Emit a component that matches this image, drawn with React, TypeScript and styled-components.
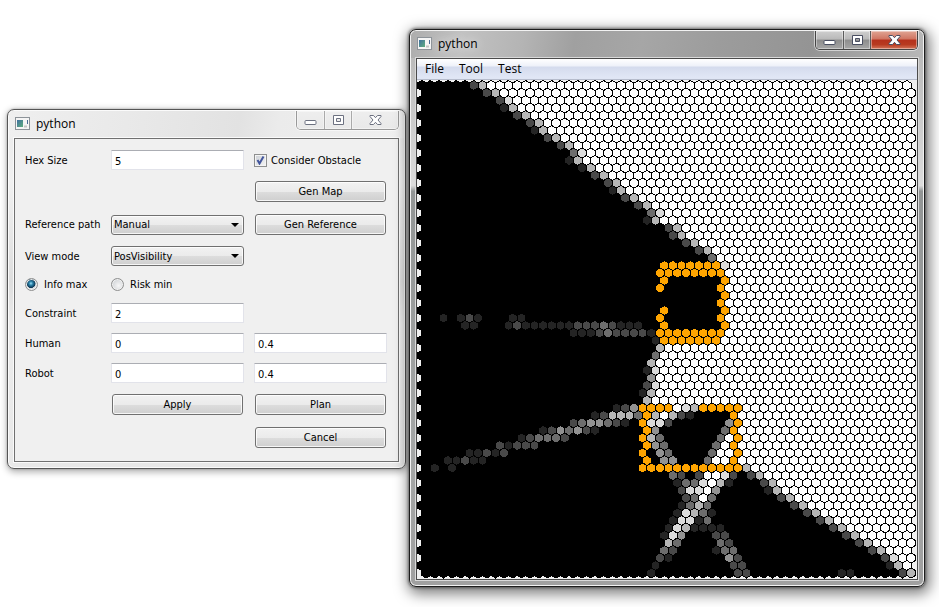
import React from "react";
import styled, { createGlobalStyle } from "styled-components";

const GlobalStyle = createGlobalStyle`
  *, *::before, *::after { box-sizing: border-box; }
  body {
    margin: 0;
    background: #fff;
    color: #000;
    font-family: "DejaVu Sans Condensed", Tahoma, sans-serif;
    font-size: 11px;
    overflow-x: hidden;
  }
`;

const Desktop = styled.main`
  display: grid;
  grid-template-columns: minmax(0, 399fr) minmax(0, 516fr);
  align-items: start;
  gap: 3px;
  padding: 29px 14px 20px 7px;
`;

const Frame = styled.section<{ $active?: boolean }>`
  min-width: 0;
  margin-top: ${(p) => (p.$active ? 0 : 80)}px;
  position: relative;
  z-index: ${(p) => (p.$active ? 1 : 0)};
  padding: 0 6px 6px;
  border: 1px solid ${(p) => (p.$active ? "#1c1c1c" : "#555")};
  border-radius: 7px;
  background: ${(p) =>
    p.$active
      ? "linear-gradient(180deg, #b4b4b4 0%, #c8c8c8 14%, #dcdcdc 28%, #929595 29%, #a4a6a6 75%, #a0a0a0 100%)"
      : "linear-gradient(180deg, #e9e9e9 0%, #f1f1f1 20%, #dedede 48%, #ececec 60%, #e8e8e8 100%)"};
  box-shadow: ${(p) =>
    p.$active
      ? "inset 0 0 0 1px #f2f2f2, 0 0 3px 1px rgba(0,0,0,.45), 2px 4px 14px 3px rgba(0,0,0,.5)"
      : "inset 0 0 0 1px #fbfbfb, 0 0 2px rgba(0,0,0,.3), 1px 2px 7px 1px rgba(0,0,0,.32)"};
`;

const TitleBar = styled.header<{ $active?: boolean }>`
  display: flex;
  align-items: flex-start;
  height: 27px;
  margin: 1px -5px 0;
  padding: 0 5px 0 6px;
  border-radius: 6px 6px 0 0;
  background: ${(p) =>
    p.$active
      ? "linear-gradient(100deg, #adadad 0%, #c2c2c2 10%, #b4b4b4 22%, #a0a0a0 32%, #a6a6a6 45%, #9c9c9c 60%, #949494 78%, #b8b8b8 100%)"
      : "linear-gradient(100deg, #efefef 0%, #e9e9e9 30%, #e2e2e2 58%, #ebebeb 68%, #f0f0f0 100%)"};
`;

const Title = styled.h1<{ $active?: boolean }>`
  flex: 1;
  margin: 0 0 0 5px;
  font: 400 12px/26px "Open Sans", "Noto Sans", sans-serif;
  text-shadow: ${(p) => (p.$active ? "0 0 10px #fff" : "none")};
`;

const AppIconBox = styled.span`
  display: flex;
  margin-top: 6px;
`;

const Controls = styled.div<{ $active?: boolean }>`
  display: flex;
  height: 19px;
  border: 1px solid ${(p) => (p.$active ? "#444" : "#999")};
  border-top: 0;
  border-radius: 0 0 5px 5px;
  overflow: hidden;
  box-shadow: 0 0 0 1px rgba(255, 255, 255, 0.55);
`;

const ControlButton = styled.button<{ $active?: boolean; $close?: boolean; $divided?: boolean }>`
  display: flex;
  align-items: center;
  justify-content: center;
  width: ${(p) => (p.$close ? 47 : 27)}px;
  padding: 0;
  border: 0 solid ${(p) => (p.$active ? "#5b5b5b" : "#aaa")};
  border-left-width: ${(p) => (p.$divided ? 1 : 0)}px;
  background: ${(p) =>
    !p.$active
      ? "linear-gradient(#eee, #e9e9e9)"
      : p.$close
        ? "linear-gradient(#e0a594 0%, #cf7461 45%, #b5311c 50%, #b83a20 75%, #d3765b 100%)"
        : "linear-gradient(#cfcfcf 0%, #b9b9b9 45%, #8d8d8d 50%, #a6a6a6 100%)"};
  box-shadow: inset 0 0 0 1px rgba(255, 255, 255, 0.4);
`;

const Client = styled.div<{ $menu?: boolean }>`
  border: 1px solid ${(p) => (p.$menu ? "#4b4b4b" : "#707070")};
  box-shadow: 0 0 0 1px ${(p) => (p.$menu ? "#d9d9d9" : "#fafafa")};
  background: #f0f0f0;
`;

const MenuBar = styled.nav`
  display: flex;
  align-items: center;
  height: 21px;
  padding-left: 8px;
  gap: 15px;
  background: linear-gradient(#fff 0%, #eef1f9 35%, #d4dbed 40%, #e0e6f5 90%);
  border-bottom: 1px solid #b6bccc;
`;

const MenuItem = styled.button`
  padding: 0;
  border: 0;
  background: none;
  color: #000;
  font: 400 12px/20px "Open Sans", "Noto Sans", sans-serif;
`;

const HexMap = styled.svg`
  display: block;
  width: 100%;
  height: auto;
`;

const Form = styled.form`
  display: grid;
  grid-template-columns: 76px 1fr 1fr;
  grid-template-rows: 20px 23px 23px 20px 17px 20px 20px 20px 23px 23px;
  column-gap: 10px;
  row-gap: 10px;
  align-items: center;
  padding: 11px 11px 12px 10px;
`;

const Label = styled.label`
  grid-column: 1;
  white-space: nowrap;
`;

const Field = styled.input<{ $col?: number }>`
  grid-column: ${(p) => p.$col ?? 2};
  width: 100%;
  min-width: 0;
  height: 20px;
  padding: 2px 3px 0;
  border: 1px solid #e2e3ea;
  border-top-color: #abadb3;
  border-radius: 1px;
  background: #fff;
  color: #000;
  font: inherit;
`;

const PushButton = styled.button<{ $col?: number }>`
  grid-column: ${(p) => p.$col ?? 3};
  height: 21px;
  margin: 0 1px;
  padding: 0;
  border: 1px solid #707070;
  border-radius: 3px;
  background: linear-gradient(#f2f2f2 0%, #ebebeb 50%, #dddddd 51%, #cfcfcf 100%);
  box-shadow: inset 0 0 0 1px rgba(255, 255, 255, 0.8);
  color: #000;
  font: inherit;
`;

const SelectWrap = styled.div`
  display: flex;
  position: relative;
  grid-column: 2;
`;

const Select = styled.select`
  appearance: none;
  width: 100%;
  height: 20px;
  padding: 0 20px 0 2px;
  border: 1px solid #707070;
  border-radius: 3px;
  background: linear-gradient(#f2f2f2 0%, #ebebeb 50%, #dddddd 51%, #cfcfcf 100%);
  box-shadow: inset 0 0 0 1px rgba(255, 255, 255, 0.8);
  color: #000;
  font: inherit;
`;

const Arrow = styled.svg`
  position: absolute;
  right: 5px;
  top: 8px;
  pointer-events: none;
`;

const Choice = styled.label<{ $col: number }>`
  display: flex;
  align-items: center;
  gap: ${(p) => (p.$col === 3 ? 4 : 6)}px;
  grid-column: ${(p) => p.$col};
  white-space: nowrap;
`;

const CheckBox = styled.input`
  appearance: none;
  width: 13px;
  height: 13px;
  margin: 0;
  border: 1px solid #8e8f8f;
  background: linear-gradient(135deg, #cbcfd5, #f6f6f6);
  background-clip: content-box;
  padding: 1px;
  box-shadow: inset 0 0 0 1px #f4f4f4;
`;

const CheckWrap = styled.span`
  display: flex;
  position: relative;
`;

const CheckMark = styled.svg`
  position: absolute;
  left: 2px;
  top: 1px;
  pointer-events: none;
`;

const Radio = styled.input`
  appearance: none;
  width: 13px;
  height: 13px;
  margin: 0;
  border: 1px solid #8e8f8f;
  border-radius: 50%;
  background: radial-gradient(circle at 60% 60%, #f7f7f7, #c3c7cc);
  box-shadow: inset 0 0 0 1px #f0f0f0;
  &:checked {
    background: radial-gradient(circle at 45% 40%, #9fe0f5 0, #2d86ad 20%, #0b3450 48%, #d5dade 54%);
  }
`;

const HEX = 5;
const STEP_X = Math.sqrt(3) * HEX;
const STEP_Y = HEX * 1.5;
const COLS = 57;

const COLORS: Record<string, string> = {
  "0": "#000",
  "1": "#242424",
  "2": "#494949",
  "3": "#6d6d6d",
  "4": "#929292",
  "5": "#b6b6b6",
  "6": "#dbdbdb",
  "7": "#fff",
  o: "#ffa500",
};

// One entry per row: "column:cells" groups. Cells that follow a group ending
// in "+" stay white to the right edge; all other gaps are unseen (black).
const ROWS: string[] = [
  "6:25+", "7:25+", "9:26+", "9:15+", "11:25+", "12:25+", "13:15+", "14:25+",
  "16:25+", "17:36+", "17:15+", "18:15+", "20:25+", "21:25+", "22:15+", "23:25+",
  "25:25+", "26:36+", "26:15+", "28:25+", "29:25+", "30:25+", "32:25+", "33:3+",
  "28:ooooooo6+", "27:oooooooo+", "28:o 35:o+", "27:o 34:o+", "35:o+", "34:o+",
  "28:o 35:o+",
  "2:1 4:121 10:11 27:o 34:o+",
  "5:11 10:12111111222321 24:11 28:o 35:o+",
  "17:1112322221oooooooo+",
  "27:1ooooooo+", "27:5+", "27:3+", "26:5+", "26:16+", "26:4+", "26:26+", "25:15+",
  "26:5+",
  "22:124oooo765ooooo+",
  "20:125553o57521 36:o+",
  "17:2344321 25:o662 35:4o+",
  "14:1243421 26:o4 35:3o+",
  "11:123332 25:o53 34:37o+",
  "9:21222 26:o43 34:37o+",
  "5:11212 25:o 27:43 33:377o+",
  "3:11211 26:o 28:44 33:377o+",
  "1:1 3:1 25:oooooooooooo5+",
  "29:32 32:27762 38:25+",
  "29:1336751 39:25+",
  "30:26674 40:15+",
  "30:2373 41:25+",
  "30:1353 43:25+",
  "29:16531 44:25+",
  "29:16613 46:25+",
  "28:1651111 47:25+",
  "28:164 34:22 49:25+",
  "28:53 34:32 50:25+",
  "28:32 34:133 52:25+",
  "27:21 35:42 53:26+",
  "27:1 36:22 54:15+",
  "26:1 36:22 48:11 55:25",
];

function expandRow(spec: string): string {
  const cells = Array<string>(COLS).fill("0");
  for (const group of spec.split(" ")) {
    const [start, body] = group.split(":");
    const run = body.replace("+", "");
    let col = Number(start);
    for (const c of run) cells[col++] = c;
    if (body.endsWith("+")) cells.fill("7", col);
  }
  return cells.join("");
}

function hexPath(row: number, col: number): string {
  const cx = 4.8 + col * STEP_X + (row % 2 ? STEP_X / 2 : 0);
  const cy = 5.5 + row * STEP_Y;
  const w = STEP_X / 2;
  const pts = [
    [cx, cy - HEX], [cx + w, cy - HEX / 2], [cx + w, cy + HEX / 2],
    [cx, cy + HEX], [cx - w, cy + HEX / 2], [cx - w, cy - HEX / 2],
  ];
  return "M" + pts.map(([x, y]) => `${x.toFixed(2)} ${y.toFixed(2)}`).join("L") + "Z";
}

const LAYERS: Record<string, string> = {};
ROWS.forEach((spec, row) => {
  [...expandRow(spec)].forEach((value, col) => {
    LAYERS[value] = (LAYERS[value] ?? "") + hexPath(row, col);
  });
});

function AppIcon() {
  return (
    <AppIconBox>
      <svg width="16" height="14" viewBox="0 0 16 14" aria-hidden="true">
        <defs>
          <linearGradient id="tile" x1="0" y1="0" x2="1" y2="1">
            <stop offset="0" stopColor="#3f6fa0" />
            <stop offset="1" stopColor="#5fae7e" />
          </linearGradient>
        </defs>
        <rect x="0.5" y="0.5" width="14" height="12" fill="#f5f5f5" stroke="#8d9399" />
        <rect x="2" y="3" width="6" height="7" fill="url(#tile)" />
        <path d="M12.5 3v4" stroke="#4a6a94" />
        <path d="M9 9.5h3" stroke="#c4c4c4" strokeWidth="2" />
      </svg>
    </AppIconBox>
  );
}

function WindowControls({ active }: { active?: boolean }) {
  const ink = active ? "#494e61" : "#6c7180";
  return (
    <Controls $active={active}>
      <ControlButton type="button" aria-label="Minimize" $active={active}>
        <svg width="13" height="13" viewBox="0 0 13 13">
          <rect x="1" y="6.5" width="11" height="4" rx="1" fill="#fff" stroke={ink} />
        </svg>
      </ControlButton>
      <ControlButton type="button" aria-label="Maximize" $active={active} $divided>
        <svg width="13" height="11" viewBox="0 0 13 11">
          <path
            d="M1.5.5h10v9h-10zM4.5 3.5v3h4v-3z"
            fill="#fff"
            fillRule="evenodd"
            stroke={ink}
          />
        </svg>
      </ControlButton>
      <ControlButton type="button" aria-label="Close" $active={active} $close $divided>
        <svg width="13" height="11" viewBox="0 0 13 11">
          <path
            d="M1 .5h3.500L6.500 2.700 8.500.5H12v1L9 5l3 3.500v1H8.500L6.500 7.300 4.500 9.500H1v-1L4 5 1 1.500z"
            fill="#fff"
            stroke={ink}
          />
        </svg>
      </ControlButton>
    </Controls>
  );
}

function ComboBox({ id, options }: { id: string; options: string[] }) {
  return (
    <SelectWrap>
      <Select id={id}>
        {options.map((o) => (
          <option key={o}>{o}</option>
        ))}
      </Select>
      <Arrow width="8" height="4" viewBox="0 0 8 4" aria-hidden="true">
        <path d="M0 0h8L4 4z" fill="#000" />
      </Arrow>
    </SelectWrap>
  );
}

function SettingsDialog() {
  return (
    <Frame>
      <TitleBar>
        <AppIcon />
        <Title>python</Title>
        <WindowControls />
      </TitleBar>
      <Client>
        <Form onSubmit={(e) => e.preventDefault()}>
          <Label htmlFor="hex">Hex Size</Label>
          <Field id="hex" defaultValue="5" />
          <Choice $col={3}>
            <CheckWrap>
              <CheckBox type="checkbox" defaultChecked />
              <CheckMark width="9" height="10" viewBox="0 0 9 10" aria-hidden="true">
                <path d="M1.500 5L3.500 8.500 7.500 1.500" fill="none" stroke="#42559c" strokeWidth="2" />
              </CheckMark>
            </CheckWrap>
            Consider Obstacle
          </Choice>
          <PushButton type="button">Gen Map</PushButton>
          <Label htmlFor="ref">Reference path</Label>
          <ComboBox id="ref" options={["Manual"]} />
          <PushButton type="button">Gen Reference</PushButton>
          <Label htmlFor="view">View mode</Label>
          <ComboBox id="view" options={["PosVisibility"]} />
          <Choice $col={1}>
            <Radio type="radio" name="goal" defaultChecked />
            Info max
          </Choice>
          <Choice $col={2}>
            <Radio type="radio" name="goal" />
            Risk min
          </Choice>
          <Label htmlFor="constraint">Constraint</Label>
          <Field id="constraint" defaultValue="2" />
          <Label htmlFor="human">Human</Label>
          <Field id="human" defaultValue="0" />
          <Field $col={3} aria-label="Human weight" defaultValue="0.4" />
          <Label htmlFor="robot">Robot</Label>
          <Field id="robot" defaultValue="0" />
          <Field $col={3} aria-label="Robot weight" defaultValue="0.4" />
          <PushButton type="button" $col={2}>Apply</PushButton>
          <PushButton type="button">Plan</PushButton>
          <PushButton type="button">Cancel</PushButton>
        </Form>
      </Client>
    </Frame>
  );
}

function MapWindow() {
  return (
    <Frame $active>
      <TitleBar $active>
        <AppIcon />
        <Title $active>python</Title>
        <WindowControls active />
      </TitleBar>
      <Client $menu>
        <MenuBar>
          <MenuItem type="button">File</MenuItem>
          <MenuItem type="button">Tool</MenuItem>
          <MenuItem type="button">Test</MenuItem>
        </MenuBar>
        <HexMap viewBox="0 0 500 499" shapeRendering="crispEdges" role="img" aria-label="Visibility map">
          {Object.entries(LAYERS).map(([value, d]) => (
            <path key={value} d={d} fill={COLORS[value]} stroke="#000" strokeWidth="1" />
          ))}
        </HexMap>
      </Client>
    </Frame>
  );
}

export default function App() {
  return (
    <>
      <GlobalStyle />
      <Desktop>
        <SettingsDialog />
        <MapWindow />
      </Desktop>
    </>
  );
}
